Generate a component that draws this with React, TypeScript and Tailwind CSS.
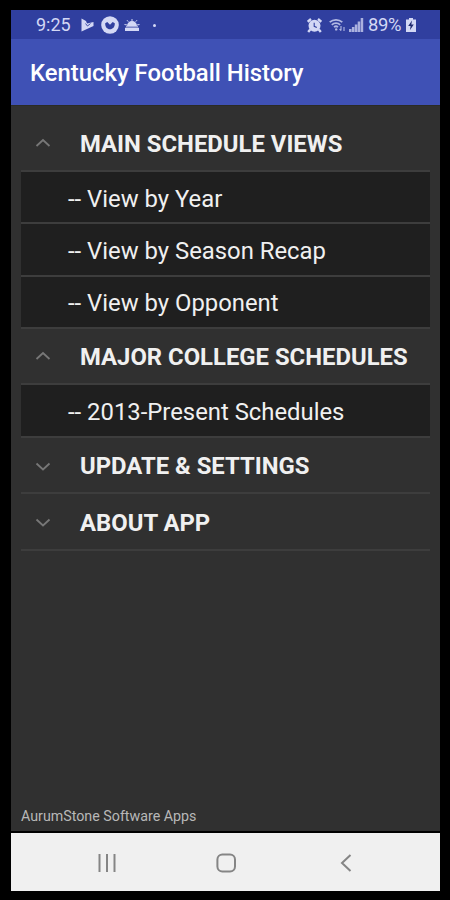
type Section = { title: string; open: boolean; items: string[] }

const sections: Section[] = [
  { title: "MAIN SCHEDULE VIEWS", open: true, items: ["View by Year", "View by Season Recap", "View by Opponent"] },
  { title: "MAJOR COLLEGE SCHEDULES", open: true, items: ["2013-Present Schedules"] },
  { title: "UPDATE & SETTINGS", open: false, items: [] },
  { title: "ABOUT APP", open: false, items: [] },
]

export default function App() {
  return (
    <div className="w-[450px] h-[900px] bg-black pt-[10px] pl-[11px] pr-[10px] pb-[9px] font-['Roboto',sans-serif]">
      <div className="h-full flex flex-col overflow-hidden">
        <StatusBar />
        <header className="h-[66px] shrink-0 bg-[#3f51b5] flex items-center pl-[19px] pt-[4px]">
          <h1 className="text-[23.85px] leading-none font-medium text-white whitespace-nowrap">Kentucky Football History</h1>
        </header>
        <main className="flex-1 bg-[#303030] border-t border-[#2a2b26] px-[10px] pt-[9.6px] pb-[7px] flex flex-col justify-between">
          <div>
            {sections.map((section) => (
              <SectionGroup key={section.title} section={section} />
            ))}
          </div>
          <p className="text-[14.25px] leading-4 text-[#b8b8b8] whitespace-nowrap">AurumStone Software Apps</p>
        </main>
        <NavBar />
      </div>
    </div>
  )
}

function SectionGroup({ section }: { section: Section }) {
  return (
    <div>
      <div className="h-[56.6px] border-b-2 border-[#3d3d3d] flex items-center pt-[4px]">
        <svg width="16" height="14" viewBox="0 0 16 14" className="ml-[14px] mr-[29px]" fill="none" stroke="#777" strokeWidth="1.8">
          <path d={section.open ? "M1.5 8 8 2l6.5 6" : "M1.5 3.5 8 9.5l6.5-6"} />
        </svg>
        <span className="text-[23.85px] leading-none font-bold text-[#f0f0f0] whitespace-nowrap">{section.title}</span>
      </div>
      {section.items.map((item) => (
        <div key={item} className="h-[52.2px] bg-[#1f1f1f] border-b-2 border-[#3d3d3d] flex items-center pl-[47px] pt-[5px]">
          <span className="text-[23.85px] leading-none text-[#f0f0f0] whitespace-nowrap">-- {item}</span>
        </div>
      ))}
    </div>
  )
}

function StatusBar() {
  return (
    <div className="h-[29px] shrink-0 bg-[#303f9f] flex items-center justify-between pl-[25px] pr-[24px] text-[#d3d8f5]">
      <div className="flex items-center pt-[1px]">
        <span className="w-[45px] text-[18px] leading-none">9:25</span>
        <svg width="13" height="14" viewBox="0 0 13 14" fill="currentColor">
          <path d="M.5.5 5 3l1 2.5L12.5 4v4L.5 13.5z" />
          <path d="M4.5 5.5 6.5 8l3-2.5" fill="none" stroke="#303f9f" strokeWidth="0.9" />
        </svg>
        <svg width="18" height="18" viewBox="0 0 18 18" className="ml-[7px]">
          <circle cx="9" cy="9" r="8.8" fill="currentColor" />
          <path d="M4.2 7.2 6.3 6 9 8.7 11.7 6l2.1 1.2c.2 3.8-2 6-4.8 6S4 11 4.2 7.2z" fill="#303f9f" />
        </svg>
        <svg width="16" height="12" viewBox="0 0 16 12" className="ml-[5px]" fill="currentColor">
          <path d="M3 7a5 5 0 0 1 10 0zM1 8.7h14V12H1z" />
          <path d="M8 0v2M3 1.2l1.3 1.5M13 1.2l-1.3 1.5M.5 5.5 3 6M15.5 5.5 13 6M2 7.8h12" stroke="currentColor" strokeWidth="1" />
        </svg>
        <span className="w-[3px] h-[3px] rounded-full bg-current ml-[13px]" />
      </div>
      <div className="flex items-center pt-[1px]">
        <svg width="15" height="15" viewBox="0 0 15 15">
          <circle cx="7.5" cy="7.8" r="6" fill="currentColor" />
          <path d="M.7 3.8 4 1M14.3 3.8 11 1M3.2 11.5 1.2 14M11.8 11.5l2 2.5" stroke="currentColor" strokeWidth="2.4" />
          <path d="M7.2 4.7v3.6l2.6 1.2" fill="none" stroke="#303f9f" strokeWidth="1.1" />
        </svg>
        <svg width="17" height="14" viewBox="0 0 17 14" className="ml-[7px]" fill="none" stroke="currentColor" strokeWidth="1.8" opacity="0.8">
          <path d="M.7 4.2a9.5 9.5 0 0 1 12.6 0M2.8 6.8a6.2 6.2 0 0 1 8.4 0M5 9.2a3 3 0 0 1 4 0" />
          <circle cx="7.2" cy="11.4" r="1.2" fill="currentColor" stroke="none" />
          <path d="M12 8v4.5M10.5 11l1.5 1.7M15 13V9" strokeWidth="1.1" />
        </svg>
        <svg width="15" height="14" viewBox="0 0 15 14" className="ml-[3px]" fill="currentColor" opacity="0.75">
          <path d="M0 11h2.5v3H0zM2.9 9h2.5v5H2.9zM5.8 6.5h2.5V14H5.8zM8.7 3.5h2.5V14H8.7zM11.7 0h2.5v14h-2.5z" />
        </svg>
        <span className="w-[38px] ml-[4px] text-[18.4px] leading-none tracking-[-0.3px]">89%</span>
        <svg width="10" height="14" viewBox="0 0 10 14">
          <path d="M3 0h4v1.5h3V14H0V1.5h3z" fill="currentColor" />
          <path d="M6 2.5 2.2 8h2.4L4 12l3.8-5.5H5.3z" fill="#202b70" />
        </svg>
      </div>
    </div>
  )
}

function NavBar() {
  return (
    <nav className="h-[60px] shrink-0 bg-[#f0f0f0] border-t-2 border-black flex items-center pt-[2px] text-[#858585]">
      <svg width="20" height="18" viewBox="0 0 20 18" className="ml-[86px]" fill="none" stroke="currentColor" strokeWidth="2">
        <path d="M2.5 0v18M10 0v18M17.5 0v18" />
      </svg>
      <svg width="20" height="20" viewBox="0 0 20 20" className="ml-[99px]" fill="none" stroke="currentColor" strokeWidth="2">
        <rect x="1.4" y="1.4" width="17.6" height="17.2" rx="5" />
      </svg>
      <svg width="12" height="18" viewBox="0 0 12 18" className="ml-[104px]" fill="none" stroke="currentColor" strokeWidth="2">
        <path d="M10.5 1 2 9l8.5 8" />
      </svg>
    </nav>
  )
}
